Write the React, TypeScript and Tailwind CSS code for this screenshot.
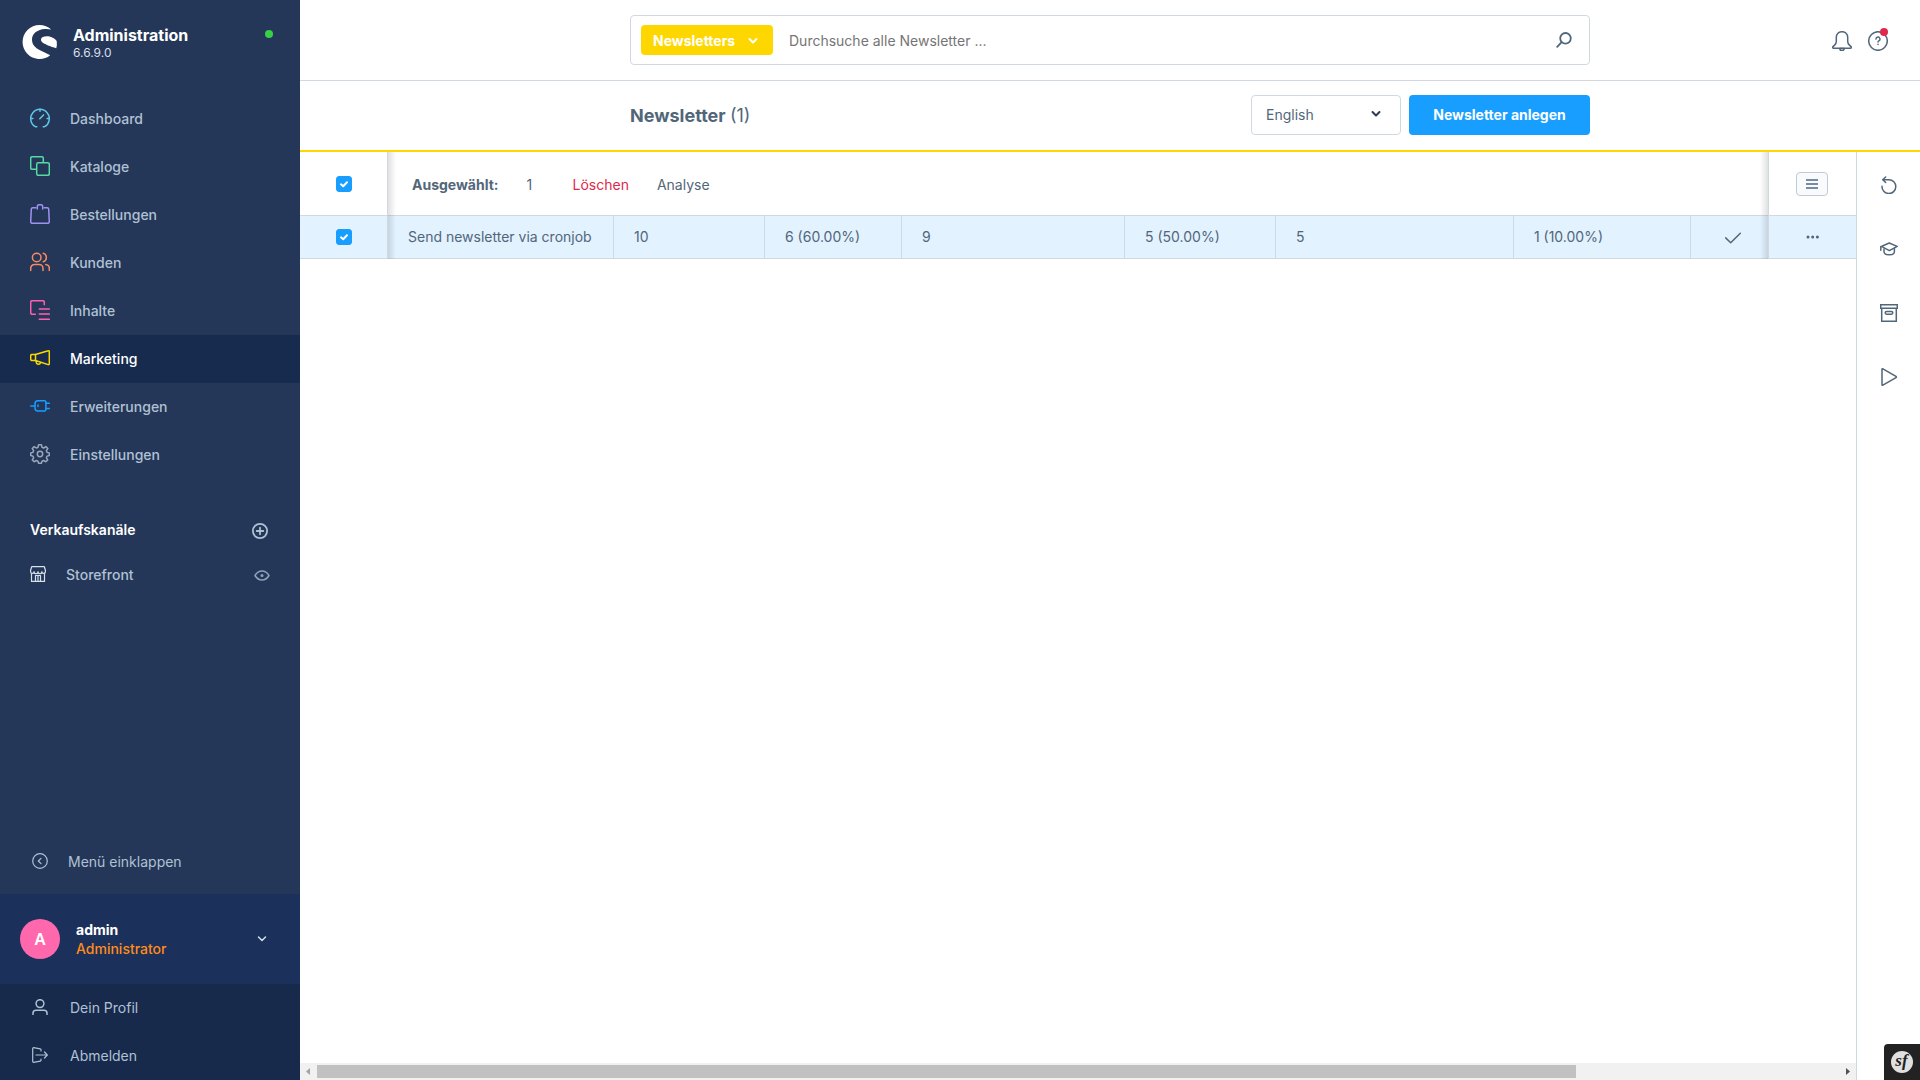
import { useState, type ReactNode } from "react";

interface NavEntry {
    label: string;
    color: string;
    icon: ReactNode;
    active?: boolean;
}

function Icon({ size = 20, box = 20, width = 1.5, className = "", children }: {
    size?: number;
    box?: number;
    width?: number;
    className?: string;
    children: ReactNode;
}) {
    return (
        <svg
            width={size}
            height={size}
            viewBox={`0 0 ${box} ${box}`}
            fill="none"
            stroke="currentColor"
            strokeWidth={width}
            strokeLinecap="round"
            strokeLinejoin="round"
            className={`shrink-0 ${className}`}
            aria-hidden="true"
        >
            {children}
        </svg>
    );
}

const navEntries: NavEntry[] = [
    {
        label: "Dashboard",
        color: "text-[#61c5e3]",
        icon: (
            <>
                <path d="M6.8 18.7H5.4A9.3 9.3 0 1 1 14.6 18.7H13.2" />
                <path d="M10 1.2v2M.9 10.5h2M17.1 10.5h2M9.8 10.8l3.7-3.9" />
            </>
        ),
    },
    {
        label: "Kataloge",
        color: "text-[#57d9a3]",
        icon: (
            <>
                <path d="M5.8 13.3H2.2A1.5 1.5 0 0 1 .7 11.8V2.2A1.5 1.5 0 0 1 2.2.7h9.6a1.5 1.5 0 0 1 1.5 1.5V6" />
                <rect x="6.7" y="6.7" width="12.6" height="12.6" rx="1.5" />
            </>
        ),
    },
    {
        label: "Bestellungen",
        color: "text-[#a092f0]",
        icon: (
            <>
                <path d="M5.8 3.7H2.8a1.5 1.5 0 0 0-1.5 1.4L.7 17.7a1.5 1.5 0 0 0 1.5 1.6h15.6a1.5 1.5 0 0 0 1.5-1.6L18.7 5.1a1.5 1.5 0 0 0-1.5-1.4h-3" />
                <path d="M7.3 5V2.5A1.8 1.8 0 0 1 9.1.7h1.8a1.8 1.8 0 0 1 1.8 1.8V5" />
            </>
        ),
    },
    {
        label: "Kunden",
        color: "text-[#f88962]",
        icon: (
            <>
                <circle cx="6.7" cy="5.5" r="4.3" />
                <path d="M.7 18.5v-2.2a3.8 3.8 0 0 1 3.8-3.8h4.7a3.8 3.8 0 0 1 3.8 3.8v2.2" />
                <path d="M13.3 1.3a4.4 4.4 0 0 1 0 8.4M15.8 12.6a3.9 3.9 0 0 1 3.5 3.9v2" />
            </>
        ),
    },
    {
        label: "Inhalte",
        color: "text-[#ff5fae]",
        icon: (
            <>
                <path d="M5.3 14.3H2.2a1.5 1.5 0 0 1-1.5-1.5V2.2A1.5 1.5 0 0 1 2.2.7h10.6a1.5 1.5 0 0 1 1.5 1.5v2.5" />
                <path d="M9.3 8.9h10M9.3 14.1h10M9.3 19.3h10" />
            </>
        ),
    },
    {
        label: "Marketing",
        color: "text-[#ffd700]",
        active: true,
        icon: (
            <>
                <path d="M5.5 6.5 18.2 2.7a.8.8 0 0 1 1.1.8v12.3a.8.8 0 0 1-1.1.8L5.5 12.5z" />
                <path d="M5.5 6.5H1.9A1.2 1.2 0 0 0 .7 7.7v3.6a1.2 1.2 0 0 0 1.2 1.2h3.6" />
                <path d="M6.2 12.8v1.2a2.2 2.2 0 0 0 4.3.7" />
            </>
        ),
    },
    {
        label: "Erweiterungen",
        color: "text-[#189eff]",
        icon: (
            <>
                <path d="M4.7 10H.7M8 4.7h6.500a1.4 1.4 0 0 1 1.4 1.4v7.4a1.4 1.4 0 0 1-1.4 1.4H8a3 3 0 0 1-3-3V7.700a3 3 0 0 1 3-3z" />
                <path d="M16 7.2h3.3M16 12.4h3.3M8 9v1.600" />
            </>
        ),
    },
    {
        label: "Einstellungen",
        color: "text-[#98a7b8]",
        icon: (
            <>
                <circle cx="10" cy="10" r="2.7" />
                <path d="M8.6.8h2.8l.6 2.5 1.7.7 2.2-1.4 1.9 1.9L16.4 6.7l.7 1.7 2.2.6v2.5l-2.2.6-.7 1.7 1.3 2.1-1.9 1.9-2.1-1.3-1.7.7-.6 2.1H8.6L8 17.2l-1.7-.7-2.1 1.3-1.9-1.9 1.3-2.1-.7-1.7-2.2-.6V9l2.2-.6.7-1.7L2.3 4.5l1.9-1.9L6.3 4 8 3.3z" />
            </>
        ),
    },
];

const cells = ["10", "6 (60.00%)", "9", "5 (50.00%)", "5", "1 (10.00%)"];

function Chevron({ className = "", width = 2 }: { className?: string; width?: number }) {
    return (
        <Icon size={10} box={10} width={width} className={className}>
            <path d="M1.5 3 5 6.5 8.5 3" />
        </Icon>
    );
}

function Checkbox({ label, checked, onChange }: { label: string; checked: boolean; onChange: () => void }) {
    return (
        <span className="relative mx-auto block size-4">
            <input
                type="checkbox"
                aria-label={label}
                checked={checked}
                onChange={onChange}
                className="block size-4 appearance-none rounded-[3px] border border-[#d1d9e0] bg-white checked:border-[#189eff] checked:bg-[#189eff]"
            />
            <Icon size={16} box={16} width={2} className="pointer-events-none absolute inset-0 text-white">
                <path d="M5 8.3 7.2 10.2 11 6.3" />
            </Icon>
        </span>
    );
}

function Sidebar() {
    return (
        <aside className="flex w-[300px] shrink-0 flex-col bg-[#243758] text-[#b0c1d4]">
            <header className="flex h-[95px] items-start pt-6 pl-[22px]">
                <svg width="36" height="36" viewBox="0 0 36 36" fill="#fff" aria-hidden="true">
                    <path d="M29.2 5.6A17 17 0 1 0 28.2 31.3C25 29.5 21.5 28.3 18 26.3 13 23.6 10 20.5 10 15.5 10 9.5 16 5.5 22.5 5.1 25 4.9 27.2 5.2 29.2 5.6z" />
                    <path d="M34.3 24.2C32.5 23.7 27 22.2 22.5 19.8 19.8 18.3 18.7 16.8 19 15.2 19.5 12.7 23.5 11.9 27.5 12.6 30.5 13.2 33.3 15 34.7 17.1A17 17 0 0 1 34.3 24.2z" />
                </svg>
                <div className="ml-[15px] flex-1">
                    <div className="text-base leading-[22px] font-bold text-white">Administration</div>
                    <div className="text-xs leading-[14px] text-[#d8dfe8]">6.6.9.0</div>
                </div>
                <span className="mt-[6px] mr-[27px] size-2 rounded-full bg-[#37d046]" />
            </header>

            <nav>
                {navEntries.map((entry) => (
                    <a
                        key={entry.label}
                        href="#"
                        className={`flex h-12 items-center pl-[30px] text-sm font-medium ${entry.active ? "bg-[#172b4e] text-white" : ""}`}
                    >
                        <Icon className={`mr-5 mb-[2px] ${entry.color}`}>{entry.icon}</Icon>
                        {entry.label}
                    </a>
                ))}
            </nav>

            <div className="mt-7 flex h-12 items-center justify-between pr-8 pl-[30px]">
                <h2 className="pb-[2px] text-sm font-semibold text-white">Verkaufskanäle</h2>
                <button aria-label="Verkaufskanal hinzufügen">
                    <Icon size={16} box={16} width={1.8}>
                        <circle cx="8" cy="8" r="7.1" />
                        <path d="M8 4.7v6.6M4.7 8h6.6" />
                    </Icon>
                </button>
            </div>
            <div className="flex h-10 items-center pr-[30px] pl-[30px] text-sm font-medium">
                <Icon size={16} box={16} width={1.2} className="mr-5 mb-[2px] text-[#d8e0ea]">
                    <path d="M1.5 7.5v7.9h13V7.5M5.5 15.3V9.5h5v5.8M8 9.5v5.8" />
                    <path d="M.6 4.2v1.5a1.7 1.7 0 0 0 3.5 0 1.9 1.9 0 0 0 3.9 0 1.9 1.9 0 0 0 3.9 0 1.7 1.7 0 0 0 3.5 0V4.2L14.3.7H1.7z" />
                </Icon>
                <a href="#" className="flex-1">Storefront</a>
                <button aria-label="Storefront anzeigen">
                    <Icon size={16} box={16} className="text-[#8fa2b6]">
                        <path d="M1 8.5c1.8-3 4.2-4.500 7-4.500s5.200 1.500 7 4.500c-1.800 3-4.200 4.500-7 4.500s-5.200-1.500-7-4.500z" />
                        <circle cx="8" cy="8.5" r=".8" />
                    </Icon>
                </button>
            </div>

            <button className="mt-auto flex h-16 items-center pl-8 text-left text-sm">
                <Icon size={16} box={16} width={1.2} className="mr-5 mb-[2px]">
                    <circle cx="8" cy="8" r="7.3" />
                    <path d="M9 5.3 6.3 8 9 10.7" />
                </Icon>
                Menü einklappen
            </button>
            <button className="flex h-[90px] items-center bg-[#1b305b] pr-[33px] pl-5 text-left">
                <span className="flex size-10 items-center justify-center rounded-full bg-[#ff68ac] text-base font-semibold text-white">
                    A
                </span>
                <span className="ml-4 flex-1 text-sm leading-[19px]">
                    <span className="block font-bold text-white">admin</span>
                    <span className="block font-medium text-[#ff8c18]">Administrator</span>
                </span>
                <Chevron width={1.5} className="text-[#d8e0ea]" />
            </button>
            <div className="bg-[#172a4c] text-sm">
                <a href="#" className="flex h-12 items-center pl-8">
                    <Icon size={16} box={16} className="mr-[22px] mb-[2px]">
                        <circle cx="8" cy="4.6" r="3.9" />
                        <path d="M1 15.5v-1.3a3 3 0 0 1 3-3h8a3 3 0 0 1 3 3v1.3" />
                    </Icon>
                    Dein Profil
                </a>
                <a href="#" className="flex h-12 items-center pl-8">
                    <Icon size={16} box={16} width={1.2} className="mr-[22px] mb-[2px]">
                        <path d="M9 4V2.7a.8.8 0 0 0-.7-.8L1.6.7a.8.8 0 0 0-.9.8v13a.8.8 0 0 0 .9.8l6.7-1.2a.8.8 0 0 0 .7-.8V12" />
                        <path d="M4 8h11.3M12.5 5l2.8 3-2.8 3" />
                    </Icon>
                    Abmelden
                </a>
            </div>
        </aside>
    );
}

function TopBar() {
    return (
        <header className="grid h-[81px] grid-cols-[1fr_960px_1fr] items-center border-b border-[#d1d9e0]">
            <div className="col-start-2 flex h-[50px] items-center rounded border border-[#d1d9e0] pr-[17px] pl-[10px]">
                <button className="flex h-[30px] w-[132px] items-center justify-between rounded bg-[#ffd700] pt-[2px] pr-[15px] pl-3 text-sm font-bold text-white">
                    Newsletters
                    <Chevron />
                </button>
                <input
                    type="text"
                    aria-label="Suche"
                    placeholder="Durchsuche alle Newsletter ..."
                    className="ml-4 flex-1 pt-[2px] text-sm text-[#52667a] outline-none placeholder:text-[#757575]"
                />
                <button aria-label="Suchen">
                    <Icon size={16} box={16} width={1.8} className="text-[#52667a]">
                        <circle cx="9.5" cy="6.3" r="5.3" />
                        <path d="M5.6 10.2 1.2 14.8" />
                    </Icon>
                </button>
            </div>
            <div className="flex justify-end gap-4 pt-[2px] pr-8 text-[#52667a]">
                <button aria-label="Benachrichtigungen">
                    <Icon>
                        <path d="M10 .7C6.7.7 4.3 3.2 4.3 6.3v4.2c0 1.6-.6 2.6-1.7 3.6L1 15.6c-.7.7-.3 1.7.6 1.7h16.8c.9 0 1.3-1 .6-1.7l-1.6-1.5c-1.1-1-1.7-2-1.7-3.6V6.3C15.7 3.2 13.3.7 10 .7z" />
                        <path d="M7.8 17.5a2.2 2.2 0 0 0 4.4 0z" />
                    </Icon>
                </button>
                <button aria-label="Hilfe" className="relative">
                    <Icon>
                        <circle cx="10" cy="10" r="9.3" />
                        <path d="M8 8.1a2 2 0 1 1 2.9 1.7c-.6.3-.9.6-.9 1.3M10 13.3v.1" />
                    </Icon>
                    <span className="absolute -top-[3px] right-0 size-2 rounded-full bg-[#de294c]" />
                </button>
            </div>
        </header>
    );
}

function PageHeader() {
    return (
        <div className="grid h-[71px] grid-cols-[1fr_960px_1fr] items-center border-b-2 border-[#ffd700] pb-px">
            <div className="col-start-2 flex items-center gap-2">
                <h1 className="flex-1 pt-[2px] text-lg font-bold text-[#52667a]">
                    Newsletter <span className="font-normal">(1)</span>
                </h1>
                <div className="relative">
                    <select
                        aria-label="Sprache"
                        className="h-10 w-[150px] appearance-none rounded border border-[#d1d9e0] bg-white px-[14px] text-sm text-[#52667a]"
                    >
                        <option>English</option>
                        <option>Deutsch</option>
                    </select>
                    <Chevron className="pointer-events-none absolute top-[14px] right-5 text-[#303a4f]" />
                </div>
                <button className="h-10 w-[181px] rounded bg-[#189eff] text-sm font-bold text-white">
                    Newsletter anlegen
                </button>
            </div>
        </div>
    );
}

function NewsletterGrid() {
    const [selected, setSelected] = useState(true);
    const toggle = () => setSelected(!selected);
    const stickyLeft =
        "relative border-r border-b border-[#d1d9e0] after:absolute after:-bottom-px after:-right-[9px] after:top-0 after:w-2 after:bg-linear-to-r after:from-black/12 after:to-transparent";
    const stickyRight =
        "relative border-l border-b border-[#d1d9e0] before:absolute before:-bottom-px before:-left-[9px] before:top-0 before:w-2 before:bg-linear-to-l before:from-black/12 before:to-transparent";

    return (
        <table className="w-full table-fixed border-separate border-spacing-0 text-sm text-[#52667a]">
            <colgroup>
                <col className="w-[88px]" />
                <col className="w-[226px]" />
                <col className="w-[151px]" />
                <col className="w-[137px]" />
                <col className="w-[223px]" />
                <col className="w-[151px]" />
                <col />
                <col className="w-[177px]" />
                <col className="w-[77px]" />
                <col className="w-[88px]" />
            </colgroup>
            <thead>
                <tr className="h-16">
                    <th className={stickyLeft}>
                        <Checkbox label="Alle auswählen" checked={selected} onChange={toggle} />
                    </th>
                    <th colSpan={8} className="border-b border-[#d1d9e0] pt-[2px] pl-6 font-normal">
                        <div className="flex gap-7">
                            <span className="font-bold">Ausgewählt:</span>
                            <span className="min-w-[18px] text-left">1</span>
                            <button className="text-[#de294c]">Löschen</button>
                            <button>Analyse</button>
                        </div>
                    </th>
                    <th className={`pr-[2px] ${stickyRight}`}>
                        <button
                            aria-label="Spalten"
                            className="mx-auto flex h-6 w-8 items-center justify-center rounded border border-[#c0cad5] bg-[#f9fafb] text-[#758ca3]"
                        >
                            <Icon size={12} box={12} width={2}>
                                <path d="M1 2h10M1 6h10M1 10h10" strokeLinecap="square" />
                            </Icon>
                        </button>
                    </th>
                </tr>
            </thead>
            <tbody>
                <tr className="h-[43px] bg-[#e2f2ff]">
                    <td className={stickyLeft}>
                        <Checkbox label="Newsletter auswählen" checked={selected} onChange={toggle} />
                    </td>
                    <td className="border-r border-b border-[#d1d9e0] pl-5 whitespace-nowrap">Send newsletter via cronjob</td>
                    {cells.map((value, i) => (
                        <td key={i} className="border-r border-b border-[#d1d9e0] pl-5">{value}</td>
                    ))}
                    <td className="border-b border-[#d1d9e0]">
                        <Icon size={16} box={16} className="ml-[34px]">
                            <path d="M.7 8.9 5.7 13.7 15.3 4.2" />
                        </Icon>
                    </td>
                    <td className={stickyRight}>
                        <button aria-label="Aktionen" className="mx-auto block">
                            <svg width="14" height="4" viewBox="0 0 14 4" fill="currentColor">
                                <circle cx="2" cy="2" r="1.5" />
                                <circle cx="6.7" cy="2" r="1.5" />
                                <circle cx="11.4" cy="2" r="1.5" />
                            </svg>
                        </button>
                    </td>
                </tr>
            </tbody>
        </table>
    );
}

function HorizontalScrollbar() {
    return (
        <div className="mt-auto flex h-[17px] items-center bg-[#f1f1f1]">
            <svg width="17" height="17" viewBox="0 0 17 17" className="shrink-0">
                <path d="M10 5v7L6 8.5z" fill="#a3a3a3" />
            </svg>
            <div className="flex-1">
                <div className="h-[13px] w-[82.7%] bg-[#c1c1c1]" />
            </div>
            <svg width="17" height="17" viewBox="0 0 17 17" className="shrink-0">
                <path d="M7 5v7l4-3.5z" fill="#505050" />
            </svg>
        </div>
    );
}

function ToolRail() {
    const tools = [
        {
            label: "Aktualisieren",
            icon: <path d="M2 10.2a6.9 6.9 0 1 0 6.9-6.5H3M5.7 1l-3 2.7 3 2.8" />,
        },
        {
            label: "Lernen",
            icon: (
                <>
                    <path d="M.8 6.8 9.2 3l8 3.4-7.8 4.2L2.8 7.2" />
                    <path d="M.8 6.8v3.4M4 9v2.4c0 1.9 2 3.4 5.2 3.4s5.2-1.5 5.2-3.4V8.4" />
                </>
            ),
        },
        {
            label: "Archiv",
            icon: (
                <>
                    <path d="M.7.7h16.6v3.5H.7zM1.7 4.2h14.6v13.1H1.7z" strokeLinejoin="miter" />
                    <rect x="5.2" y="7.4" width="7.6" height="2.8" rx="1.4" />
                </>
            ),
        },
        {
            label: "Starten",
            icon: <path d="M2 1.3v15.4c0 .5.5.7.9.5L16 9.6c.5-.3.5-.9 0-1.2L2.9.8C2.5.6 2 .8 2 1.3z" />,
        },
    ];

    return (
        <aside className="w-16 shrink-0 border-l border-[#d1d9e0] pt-px text-[#52667a]">
            {tools.map((tool) => (
                <button key={tool.label} aria-label={tool.label} className="flex h-16 w-full items-center justify-center">
                    <Icon size={18} box={18}>{tool.icon}</Icon>
                </button>
            ))}
        </aside>
    );
}

export default function App() {
    return (
        <div className="flex min-h-screen bg-white font-['Inter',sans-serif]">
            <Sidebar />
            <div className="flex min-w-0 flex-1 flex-col">
                <TopBar />
                <PageHeader />
                <div className="flex flex-1">
                    <main className="flex min-w-0 flex-1 flex-col">
                        <NewsletterGrid />
                        <HorizontalScrollbar />
                    </main>
                    <ToolRail />
                </div>
            </div>

            {/* Symfony profiler toggle */}
            <button
                aria-label="Symfony"
                className="fixed right-0 bottom-0 flex size-9 items-center justify-center rounded-tl bg-[#222]"
            >
                <svg width="22" height="22" viewBox="0 0 22 22" className="overflow-visible">
                    <circle cx="11" cy="11" r="11" fill="#e0e0e0" />
                    <text
                        x="10.5"
                        y="15"
                        textAnchor="middle"
                        fill="#222"
                        className="font-['Liberation_Serif',serif] text-[17px] font-bold italic"
                    >
                        sf
                    </text>
                </svg>
            </button>
        </div>
    );
}
